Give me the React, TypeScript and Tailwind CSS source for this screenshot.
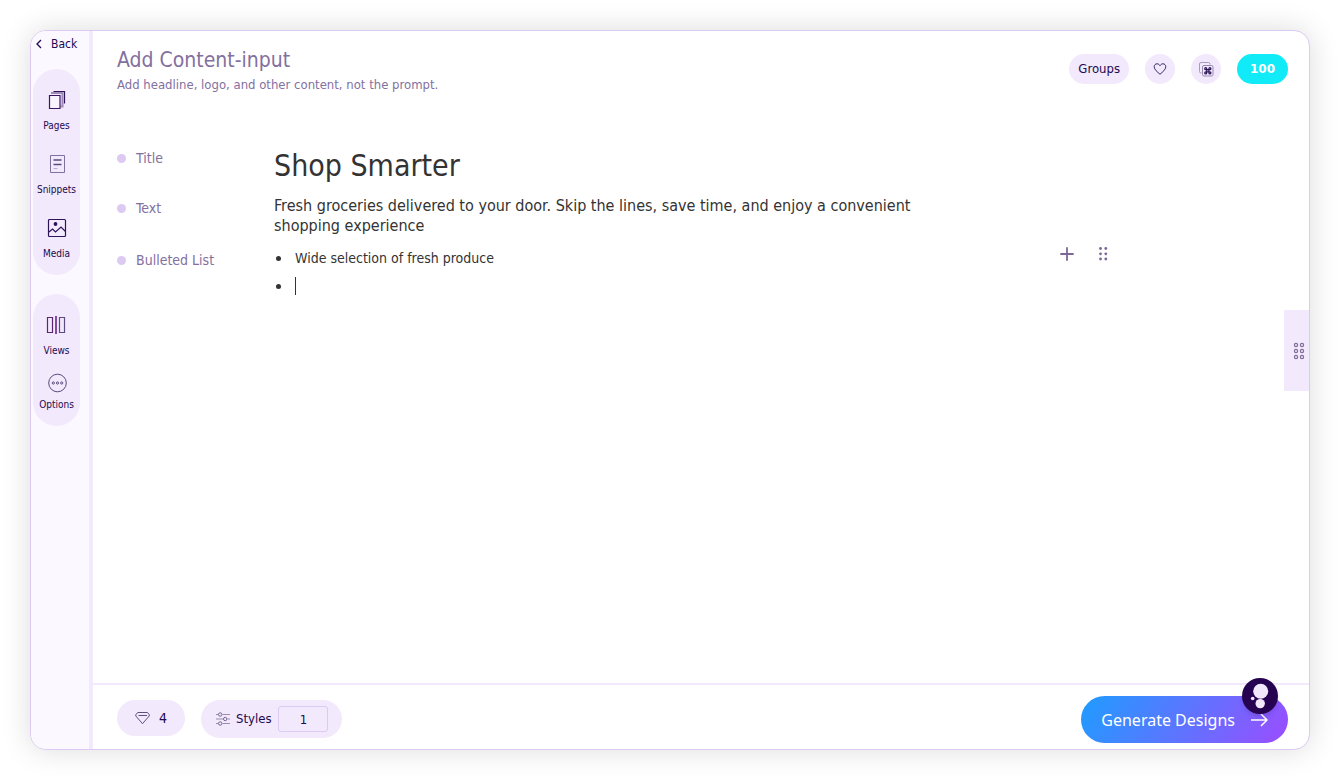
import type { ReactNode } from "react";

function PagesIcon() {
  return (
    <svg width="18" height="20" viewBox="0 0 18 20" fill="none">
      <path d="M5.500 1.500h11v12" stroke="#2f1458" strokeWidth="1.200" />
      <path d="M3 3h11.500v13.500h-2" stroke="#9b8bb5" strokeWidth="2" />
      <path d="M1.500 5.500h10.500v13h-10.500z" stroke="#3c1465" strokeWidth="1.200" fill="#f8f3fe" />
    </svg>
  );
}

function SnippetsIcon() {
  return (
    <svg width="18" height="20" viewBox="0 0 18 20" fill="none" stroke="#7f70a0">
      <path d="M2.500 1.500h14v17h-14z" />
      <path d="M5.500 6h8M5.500 10.500h8" stroke="#5a4a80" strokeWidth="1.300" />
      <path d="M5.500 14.500h4" stroke="#b8a8d8" />
    </svg>
  );
}

function MediaIcon() {
  return (
    <svg width="20" height="20" viewBox="0 0 20 20" fill="none" stroke="#2f1458" strokeWidth="1.200">
      <rect x="1.500" y="1.500" width="17" height="17" rx="1" />
      <circle cx="8.500" cy="6" r="1.300" fill="#23084f" />
      <path d="M2 14l3.500-3 3 3 5.500-5 4.500 4.500" />
    </svg>
  );
}

function ViewsIcon() {
  return (
    <svg width="20" height="20" viewBox="0 0 20 20" fill="none" stroke="#5d4a80" strokeWidth="1.200">
      <path d="M1.500 2.500h5v15h-5z" stroke="#5c2672" />
      <path d="M10 1v18" stroke="#5c1680" strokeWidth="1.500" />
      <path d="M13.500 2.500h5v15h-5z" />
    </svg>
  );
}

function OptionsIcon() {
  return (
    <svg width="20" height="20" viewBox="0 0 20 20" fill="none" stroke="#5b4b7b">
      <circle cx="10.500" cy="10" r="8.800" />
      <circle cx="6.300" cy="10" r="1.100" />
      <circle cx="10.500" cy="10" r="1.100" />
      <circle cx="14.700" cy="10" r="1.100" />
    </svg>
  );
}

function HeartIcon() {
  return (
    <svg width="14" height="14" viewBox="0 0 14 14" fill="none" stroke="#3b2963">
      <path d="M7 12.300C4.200 9.800 1.200 7.500 1.200 4.700 1.200 3 2.500 1.800 4 1.800c1.300 0 2.300.7 3 1.900.7-1.200 1.700-1.900 3-1.900 1.500 0 2.800 1.200 2.800 2.900 0 2.800-3 5.100-5.800 7.600z" />
    </svg>
  );
}

function CommandIcon() {
  return (
    <svg width="16" height="16" viewBox="0 0 16 16" fill="none">
      <path d="M3.500 12H3a1.500 1.500 0 0 1-1.500-1.500v-7.500a1.500 1.500 0 0 1 1.500-1.500h7.500a1.500 1.500 0 0 1 1.500 1.500v.5" stroke="#a79abd" />
      <rect x="4.500" y="4.500" width="10.500" height="10.500" rx="1.500" stroke="#9587ae" />
      <g stroke="#2b1554" strokeWidth="1.200">
        <path d="M8.700 8.700h2.200v2.200h-2.200z" />
        <circle cx="7.700" cy="7.700" r="1" />
        <circle cx="11.900" cy="7.700" r="1" />
        <circle cx="7.700" cy="11.900" r="1" />
        <circle cx="11.900" cy="11.900" r="1" />
      </g>
    </svg>
  );
}

function DiamondIcon() {
  return (
    <svg width="16" height="14" viewBox="0 0 16 14" fill="none" stroke="#5f4f80">
      <path d="M3 1.500h9.500l1.700 2v1.500l-6.700 7.700L.8 5v-1.500z" strokeLinejoin="round" />
      <path d="M3.500 4.500h8.500" />
    </svg>
  );
}

function SlidersIcon() {
  return (
    <svg width="14" height="16" viewBox="0 0 14 16" fill="none" stroke="#75658f">
      <path d="M0 3.500h2M6.500 3.500H14M0 8h7M11.500 8H14M0 12.500h2M6.500 12.500H14" stroke="#9b8cb3" />
      <circle cx="4.200" cy="3.500" r="1.700" />
      <circle cx="9.200" cy="8" r="1.700" />
      <circle cx="4.200" cy="12.500" r="1.700" />
    </svg>
  );
}

function GripIcon() {
  return (
    <svg width="10" height="14" viewBox="0 0 10 14" fill="#7d6797">
      {[1.5, 6.8, 12].map((y) => (
        <g key={y}>
          <circle cx="2.500" cy={y} r="1.400" />
          <circle cx="7.800" cy={y} r="1.400" />
        </g>
      ))}
    </svg>
  );
}

function RingGripIcon() {
  return (
    <svg width="12" height="18" viewBox="0 0 12 18" fill="none" stroke="#806d98" strokeWidth="1.200">
      {[3, 9, 15].map((y) => (
        <g key={y}>
          <circle cx="3" cy={y} r="1.600" />
          <circle cx="9" cy={y} r="1.600" />
        </g>
      ))}
    </svg>
  );
}

function AssistantIcon() {
  return (
    <svg width="36" height="36" viewBox="0 0 36 36" fill="#f1e8fc">
      <circle cx="18.700" cy="13.200" r="7.500" />
      <circle cx="18.200" cy="25.600" r="4.700" />
      <circle cx="10.700" cy="20.500" r="1.800" />
    </svg>
  );
}

function NavButton({ icon, label, tight }: { icon: ReactNode; label: string; tight?: boolean }) {
  return (
    <button
      type="button"
      className={`flex flex-col items-center text-[10px] leading-4 text-[#23084f] ${tight ? "gap-1" : "gap-2"}`}
    >
      {icon}
      <span>{label}</span>
    </button>
  );
}

function RowLabel({ children }: { children: ReactNode }) {
  return (
    <div className="flex h-5 w-[157px] shrink-0 items-center gap-2.5 text-sm text-[#83709f]">
      <span className="size-[9px] rounded-full bg-[#dccaf3]" />
      {children}
    </div>
  );
}

export default function App() {
  return (
    <div className="flex min-h-screen bg-white px-[30px] pt-[30px] pb-[31px] font-['DejaVu_Sans_Condensed','Noto_Sans',sans-serif] text-[#23084f]">
      <div className="relative flex flex-1 overflow-hidden rounded-2xl border border-[#dccaf3] bg-white shadow-[0_0_30px_rgba(0,0,0,0.14)]">
        <aside className="flex w-[62px] shrink-0 flex-col border-r-4 border-[#f2e9fc] bg-[#fbf9ff]">
          <button type="button" className="mt-[3px] flex h-5 items-center gap-2 pl-1 text-xs">
            <svg width="8" height="10" viewBox="0 0 8 10" fill="none" stroke="#23084f" strokeWidth="1.300">
              <path d="M6 1L2 5l4 4" />
            </svg>
            Back
          </button>
          <nav aria-label="Content" className="mt-[15px] ml-0.5 flex w-[47px] flex-col items-center gap-5 rounded-full bg-[#f2e9fc] pt-[21px] pb-[13px]">
            <NavButton icon={<PagesIcon />} label="Pages" />
            <NavButton icon={<SnippetsIcon />} label="Snippets" />
            <NavButton icon={<MediaIcon />} label="Media" />
          </nav>
          <nav aria-label="Display" className="mt-[19px] ml-0.5 flex w-[47px] flex-col items-center gap-3.5 rounded-full bg-[#f2e9fc] pt-[21px] pb-[13px]">
            <NavButton icon={<ViewsIcon />} label="Views" />
            <NavButton icon={<OptionsIcon />} label="Options" tight />
          </nav>
        </aside>

        <div className="flex min-w-0 flex-1 flex-col">
          <header className="flex items-start justify-between pt-[17px] pr-[21px] pl-6">
            <div className="text-[#83709f]">
              <h1 className="text-[21px] leading-6">Add Content-input</h1>
              <p className="mt-1 text-[13px] leading-[18px]">Add headline, logo, and other content, not the prompt.</p>
            </div>
            <div className="mt-1.5 flex items-center gap-4">
              <button type="button" className="h-[30px] rounded-full bg-[#f2e9fc] px-[9px] text-[13px]">Groups</button>
              <button type="button" aria-label="Favorites" className="flex size-[30px] items-center justify-center rounded-full bg-[#f2e9fc]">
                <HeartIcon />
              </button>
              <button type="button" aria-label="Shortcuts" className="flex size-[30px] items-center justify-center rounded-full bg-[#f2e9fc]">
                <CommandIcon />
              </button>
              <button type="button" className="h-[30px] w-[51px] rounded-full bg-[#10ebf7] font-['DejaVu_Sans',sans-serif] text-xs font-bold text-white">100</button>
            </div>
          </header>

          <main className="flex-1 pt-[52px] pr-6 pl-6">
            <section className="flex">
              <div className="pt-0.5"><RowLabel>Title</RowLabel></div>
              <h2 className="text-[30px] leading-10 text-[#333333]">Shop Smarter</h2>
            </section>
            <section className="mt-2.5 flex">
              <div className="pt-0.5"><RowLabel>Text</RowLabel></div>
              <p className="w-[660px] text-base leading-5 text-[#333333]">
                Fresh groceries delivered to your door. Skip the lines, save time, and enjoy a convenient shopping experience
              </p>
            </section>
            <section className="mt-2 flex">
              <div className="pt-1.5"><RowLabel>Bulleted List</RowLabel></div>
              <ul className="w-[786px] text-sm leading-7 text-[#333333]">
                <li className="flex items-center gap-3.5">
                  <span className="ml-0.5 size-[5px] rounded-full bg-[#333333]" />
                  Wide selection of fresh produce
                </li>
                <li className="flex h-7 items-center gap-3.5">
                  <span className="ml-0.5 size-[5px] rounded-full bg-[#333333]" />
                  <span className="h-[18px] w-px bg-[#333333]" />
                </li>
              </ul>
              <div className="flex h-5 items-center gap-6">
                <button type="button" aria-label="Add item">
                  <svg width="14" height="14" viewBox="0 0 14 14" stroke="#7d6797" strokeWidth="1.800" strokeLinecap="round">
                    <path d="M7 1v12M1 7h12" />
                  </svg>
                </button>
                <button type="button" aria-label="Reorder">
                  <GripIcon />
                </button>
              </div>
            </section>
          </main>

          <footer className="flex items-start justify-between border-t-2 border-[#f2e9fc] pt-[11px] pr-[21px] pb-1.5 pl-6">
            <div className="mt-1 flex items-start gap-4">
              <button type="button" className="flex h-9 w-[68px] items-center justify-center gap-2 rounded-full bg-[#f2e9fc] text-sm">
                <DiamondIcon />4
              </button>
              <label className="flex h-[38px] items-center rounded-full bg-[#f2e9fc] pr-3.5 pl-[15px] text-[13px]">
                <SlidersIcon />
                <span className="ml-1.5">Styles</span>
                <input type="text" defaultValue="1" className="ml-[7px] h-[26px] w-[50px] rounded-[3px] border border-[#dccaf3] bg-transparent text-center text-[13px]" />
              </label>
            </div>
            <button type="button" className="flex h-[47px] items-center gap-4 rounded-full bg-linear-[120deg] from-[#1f9cff] to-[#9b4dff] px-5 font-['Noto_Sans',sans-serif] text-base text-white">
              Generate Designs
              <svg width="17" height="14" viewBox="0 0 17 14" fill="none" stroke="white" strokeWidth="1.500">
                <path d="M0 7h16M10 1l6 6-6 6" />
              </svg>
            </button>
          </footer>
        </div>

        <button type="button" aria-label="Open side panel" className="absolute top-[279px] right-0 flex h-[81px] w-[25px] items-center justify-center bg-[#f2e9fc] pl-1">
          <RingGripIcon />
        </button>
        <button type="button" aria-label="Assistant" className="absolute right-[31px] bottom-[35px] size-9 rounded-full bg-[#260350] shadow-md">
          <AssistantIcon />
        </button>
      </div>
    </div>
  );
}
